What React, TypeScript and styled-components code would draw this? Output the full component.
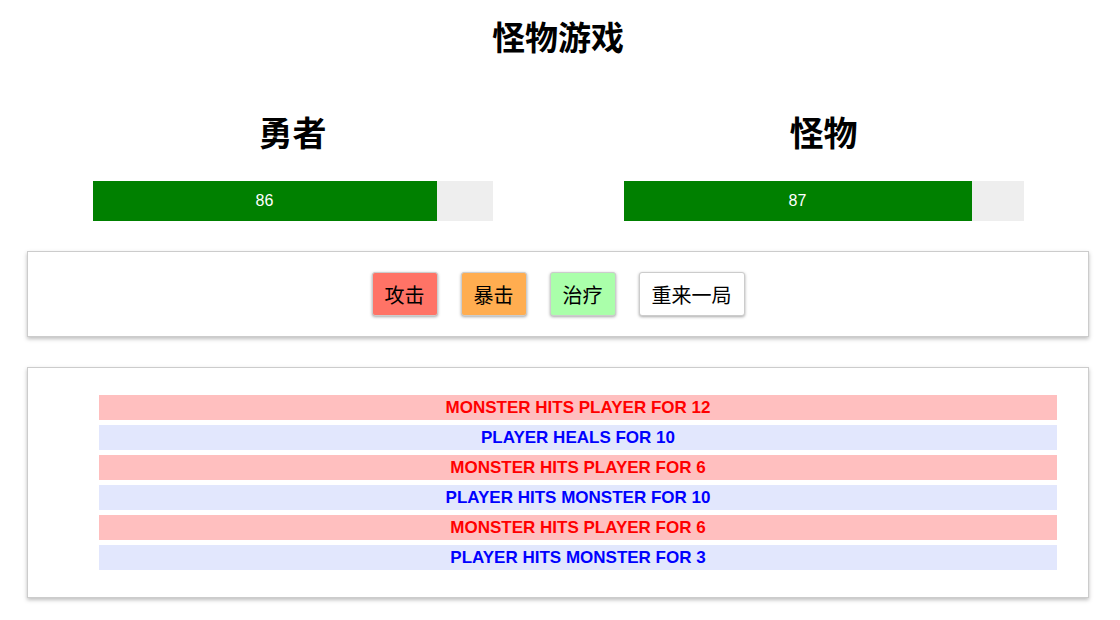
import styled, { createGlobalStyle } from "styled-components";

const GlobalStyle = createGlobalStyle`
  html, body {
    margin: 0;
    padding: 0;
    background: #fff;
  }
  body {
    font-family: "Liberation Sans", "Noto Sans CJK SC", sans-serif;
  }
`;

type LogEntry = {
  id: number;
  actor: "player" | "monster";
  text: string;
};

const logs: LogEntry[] = [
  { id: 1, actor: "monster", text: "Monster hits Player for 12" },
  { id: 2, actor: "player", text: "Player heals for 10" },
  { id: 3, actor: "monster", text: "Monster hits Player for 6" },
  { id: 4, actor: "player", text: "Player hits Monster for 10" },
  { id: 5, actor: "monster", text: "Monster hits Player for 6" },
  { id: 6, actor: "player", text: "Player hits Monster for 3" },
];

const actions = [
  { id: "attack", label: "攻击", variant: "attack" },
  { id: "special", label: "暴击", variant: "special" },
  { id: "heal", label: "治疗", variant: "heal" },
  { id: "reset", label: "重来一局", variant: "plain" },
] as const;

function HealthBar({ value }: { value: number }) {
  return (
    <Bar>
      <BarFill style={{ width: `${value}%` }}>{value}</BarFill>
    </Bar>
  );
}

function App() {
  return (
    <>
      <GlobalStyle />
      <Page>
        <Title>怪物游戏</Title>
        <Fighters>
          <Fighter>
            <FighterName>勇者</FighterName>
            <HealthBar value={86} />
          </Fighter>
          <Fighter>
            <FighterName>怪物</FighterName>
            <HealthBar value={87} />
          </Fighter>
        </Fighters>
        <Controls>
          {actions.map(({ id, label, variant }) => (
            <ActionButton key={id} $variant={variant}>
              {label}
            </ActionButton>
          ))}
        </Controls>
        <LogPanel>
          <LogList>
            {logs.map(({ id, actor, text }) => (
              <LogItem key={id} $actor={actor}>
                {text}
              </LogItem>
            ))}
          </LogList>
        </LogPanel>
      </Page>
    </>
  );
}

const Page = styled.div`
  padding: 13px 31px 20px 27px;
`;

const Title = styled.h1`
  font-family: "Noto Sans CJK SC", sans-serif;
  font-size: 33px;
  font-weight: 700;
  line-height: 46px;
  margin: 0;
  text-align: center;
  color: #000;
`;

const Fighters = styled.div`
  display: grid;
  grid-template-columns: 1fr 1fr;
  margin-top: 48px;
`;

const Fighter = styled.div`
  align-items: center;
  display: flex;
  flex-direction: column;
`;

const FighterName = styled.h2`
  font-family: "Noto Sans CJK SC", sans-serif;
  font-size: 34px;
  font-weight: 700;
  line-height: 50px;
  margin: 0 0 24px 0;
  color: #000;
`;

const Bar = styled.div`
  background-color: #eee;
  height: 40px;
  width: 400px;
`;

const BarFill = styled.div`
  background-color: green;
  color: #fff;
  font-family: "Liberation Sans", sans-serif;
  font-size: 16px;
  height: 100%;
  line-height: 40px;
  text-align: center;
`;

const Panel = styled.section`
  background: #fff;
  border: 1px solid #ccc;
  box-shadow: 0 2px 4px rgba(0, 0, 0, 0.26);
`;

const Controls = styled(Panel)`
  display: flex;
  gap: 23px;
  justify-content: center;
  margin-top: 30px;
  padding: 20px 0;
`;

const buttonColors = {
  attack: "#ff7366",
  special: "#ffad50",
  heal: "#aaffaa",
  plain: "#fff",
};

const ActionButton = styled.button<{ $variant: keyof typeof buttonColors }>`
  background-color: ${(props) => buttonColors[props.$variant]};
  border: 1px solid #ccc;
  border-radius: 3px;
  box-shadow: 0 1px 3px rgba(0, 0, 0, 0.35);
  color: #000;
  cursor: pointer;
  font-family: "Noto Sans CJK SC", sans-serif;
  font-size: 20px;
  height: 44px;
  padding: 0 12px;
`;

const LogPanel = styled(Panel)`
  margin-top: 30px;
  padding: 27px 31px;
`;

const LogList = styled.ul`
  display: flex;
  flex-direction: column;
  gap: 5px;
  list-style: none;
  margin: 0;
  padding: 0 0 0 40px;
`;

const LogItem = styled.li<{ $actor: "player" | "monster" }>`
  background-color: ${(props) =>
    props.$actor === "monster" ? "#ffbfbf" : "#e2e7fd"};
  color: ${(props) => (props.$actor === "monster" ? "#ff0000" : "#0000ff")};
  font-family: "Liberation Sans", sans-serif;
  font-size: 17px;
  font-weight: 700;
  height: 25px;
  line-height: 25px;
  text-align: center;
  text-transform: uppercase;
`;

export default App;
